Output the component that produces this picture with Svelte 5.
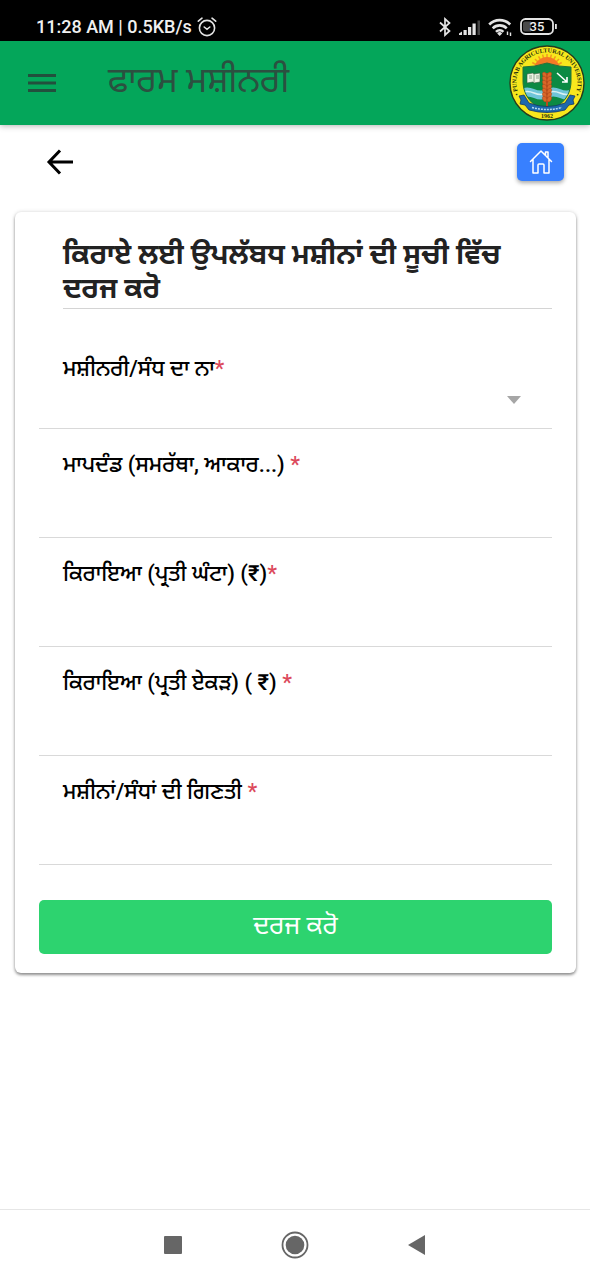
<script lang="ts">
  type Field = {
    id: string;
    label: string;
    star: string;
    kind: "select" | "text" | "number";
  };

  const fields: Field[] = [
    { id: "machine", label: "ਮਸ਼ੀਨਰੀ/ਸੰਧ ਦਾ ਨਾ", star: "*", kind: "select" },
    { id: "spec", label: "ਮਾਪਦੰਡ (ਸਮਰੱਥਾ, ਆਕਾਰ...)", star: " *", kind: "text" },
    { id: "rent-hour", label: "ਕਿਰਾਇਆ (ਪ੍ਰਤੀ ਘੰਟਾ) (₹)", star: "*", kind: "number" },
    { id: "rent-acre", label: "ਕਿਰਾਇਆ (ਪ੍ਰਤੀ ਏਕੜ) ( ₹)", star: " *", kind: "number" },
    { id: "count", label: "ਮਸ਼ੀਨਾਂ/ਸੰਧਾਂ ਦੀ ਗਿਣਤੀ", star: " *", kind: "number" },
  ];

  const rays = Array.from({ length: 13 }, (_, i) => i * 15 - 90);
  const grains = [27, 31, 35, 39, 43, 47, 51];
</script>

<div class="screen">
  <div class="status">
    <div class="status-side">
      <span>11:28 AM | 0.5KB/s</span>
      <svg width="20" height="22" viewBox="0 0 20 22" fill="none" stroke="#e4e4e4" stroke-width="1.6" stroke-linecap="round">
        <circle cx="10" cy="12" r="7.6" />
        <path d="M1.3 5.2 5 2.2M18.7 5.2 15 2.2M7.2 11l2.8 2.3 2.8-2.3" />
      </svg>
    </div>
    <div class="status-side">
      <svg width="12" height="20" viewBox="0 0 12 20" fill="none" stroke="#e4e4e4" stroke-width="1.7">
        <path d="M1 5.5 10.5 14 6 18V2l4.5 4L1 14.5" />
      </svg>
      <svg width="23" height="18" viewBox="0 0 23 18" fill="#e4e4e4">
        <path d="M1 15.5 4 13.5V17H1zM5.5 12h3.2v5H5.500zM10 9h3.200v8H10zM14.500 5.500h3.200V17h-3.200z" />
        <path d="M19.500 2.500h2.500V17h-2.500z" fill="#444" />
      </svg>
      <svg width="25" height="20" viewBox="0 0 25 20" fill="none" stroke="#e4e4e4" stroke-width="2.600">
        <path d="M1.200 7.500a14.700 14.700 0 0 1 21 0M4.700 11.300a9.800 9.800 0 0 1 14 0M8 14.800a5.200 5.200 0 0 1 7.400 0" />
        <path d="m11.700 19-2.500-2.600a3.500 3.500 0 0 1 5 0z" fill="#e4e4e4" stroke="none" />
        <path d="M19.500 14.500V18M22.500 15.500V19" stroke-width="1.400" />
      </svg>
      <svg width="38" height="18" viewBox="0 0 38 18">
        <rect x="1" y="1" width="32" height="15" rx="4.500" fill="none" stroke="#e4e4e4" stroke-width="1.800" />
        <path d="M5 3.500h6v10H5a2 2 0 0 1-2-2v-6a2 2 0 0 1 2-2z" fill="#4a4a4a" />
        <path d="M35 6h1.800v5H35z" fill="#e4e4e4" />
        <text x="17" y="13" class="battery-text">35</text>
      </svg>
    </div>
  </div>

  <header class="header">
    <button class="icon-button" type="button" aria-label="Menu">
      <svg width="28" height="22" viewBox="0 0 28 22" stroke="#22503d" stroke-width="2.800">
        <path d="M0 3.500h28M0 11h28M0 18.500h28" />
      </svg>
    </button>
    <h1 class="title">ਫਾਰਮ ਮਸ਼ੀਨਰੀ</h1>
    <svg width="76" height="76" viewBox="0 0 76 76">
      <defs>
        <path id="ring" d="M11.800 53.800A30.600 30.600 0 1 1 64.200 53.800" />
        <clipPath id="shield"><path d="M14 22q12 0 24-4 12 4 24 4v14c0 17-12 26-24 31-12-5-24-14-24-31z" /></clipPath>
      </defs>
      <circle cx="38" cy="38" r="37" fill="#f8e71d" stroke="#263b1c" stroke-width="1.400" />
      <g stroke="#f29a1e" stroke-width="1.500">
        {#each rays as angle}
          <path d="M38 9v12" transform="rotate({angle} 38 26)" />
        {/each}
      </g>
      <circle cx="38" cy="25" r="13" fill="#f47a26" />
      <g clip-path="url(#shield)">
        <path d="M12 14h52v54H12z" fill="#0b8a43" />
        <path d="M12 44q6-3 13 0t13 0 13 0 13 0v9q-6 3-13 0t-13 0-13 0-13 0z" fill="#6fc5d9" />
        <path d="M12 48q6-3 13 0t13 0 13 0 13 0" fill="none" stroke="#d8f1f3" stroke-width="1.500" />
      </g>
      <path d="M14 22q12 0 24-4 12 4 24 4v14c0 17-12 26-24 31-12-5-24-14-24-31z" fill="none" stroke="#24713b" />
      <path d="m18 29 6-1 1 1 6-1v9l-6 1-1-1-6 1z" fill="#eef4e4" stroke="#355d3c" stroke-width=".6" />
      <path d="M25 29v8M20 31h3M20 33h3M27 31h3M27 33h3" stroke="#65856b" stroke-width=".7" />
      <path d="m48 28 10 9m0-5v5h-5" fill="none" stroke="#fff" stroke-width="1.600" />
      <path d="M38 28v36" stroke="#b84b1d" stroke-width="2" />
      <g fill="#d96829" stroke="#9e3c16" stroke-width=".4">
        {#each grains as y}
          <ellipse cx="35.700" cy={y + 3} rx="2" ry="3" transform="rotate(-28 35.700 {y + 3})" />
          <ellipse cx="40.300" cy={y + 3} rx="2" ry="3" transform="rotate(28 40.300 {y + 3})" />
        {/each}
      </g>
      <path d="m10 51 5-1 5 8q18 7 36 0l5-8 5 1-2 4 1 4-5 1-4 5q-18 5-36 0l-4-5-5-1 1-4z" fill="#1c68ad" stroke="#173a63" stroke-width=".8" />
      <path d="M23 62.500q15 4 30 0" fill="none" stroke="#b6d9ee" stroke-width="1.500" stroke-dasharray="2 1" />
      <text class="logo-text"><textPath href="#ring" startOffset="50%">• PUNJAB AGRICULTURAL UNIVERSITY •</textPath></text>
      <text class="logo-text" x="38" y="73">1962</text>
    </svg>
  </header>

  <main class="content">
    <div class="actions">
      <button class="icon-button" type="button" aria-label="Back">
        <svg width="28" height="28" viewBox="0 0 28 28" fill="none" stroke="#000" stroke-width="3">
          <path d="M27 14H3M14 2.500 3 14l11 11.500" />
        </svg>
      </button>
      <button class="icon-button home" type="button" aria-label="Home">
        <svg width="24" height="26" viewBox="0 0 24 26" fill="none" stroke="#fff" stroke-width="1.500" stroke-linejoin="round" stroke-linecap="round">
          <path d="M1.500 12.500 12 2l10.500 10.500M4 10.500V24h5v-8q0-1 1-1h4q1 0 1 1v8h5V10.500M16.500 6.500V3H19v6" />
        </svg>
      </button>
    </div>

    <form class="card">
      <h2 class="heading">ਕਿਰਾਏ ਲਈ ਉਪਲੱਬਧ ਮਸ਼ੀਨਾਂ ਦੀ ਸੂਚੀ ਵਿੱਚ ਦਰਜ ਕਰੋ</h2>
      {#each fields as field}
        <div class="field">
          <label for={field.id}>{field.label}<span class="star">{field.star}</span></label>
          {#if field.kind === "select"}
            <div class="select-wrap">
              <select id={field.id} required>
                <option value=""></option>
              </select>
              <svg width="14" height="8" viewBox="0 0 14 8" fill="#a6a6a6"><path d="M0 0h14L7 8z" /></svg>
            </div>
          {:else}
            <input id={field.id} type={field.kind} required />
          {/if}
        </div>
      {/each}
      <button class="submit" type="submit">ਦਰਜ ਕਰੋ</button>
    </form>
  </main>

  <nav class="system-nav">
    <button class="icon-button" type="button" aria-label="Recent apps">
      <svg width="28" height="28" viewBox="0 0 28 28"><rect x="5" y="5" width="18" height="18" rx="1" fill="#666" /></svg>
    </button>
    <button class="icon-button" type="button" aria-label="Home screen">
      <svg width="28" height="28" viewBox="0 0 28 28">
        <circle cx="14" cy="14" r="12.500" fill="none" stroke="#666" stroke-width="1.800" />
        <circle cx="14" cy="14" r="9.300" fill="#666" />
      </svg>
    </button>
    <button class="icon-button" type="button" aria-label="Previous screen">
      <svg width="28" height="28" viewBox="0 0 28 28"><path d="M5 14 22 4v20z" fill="#666" /></svg>
    </button>
  </nav>
</div>

<style>
  :global(body) {
    margin: 0;
    background: #fff;
  }
  .screen {
    display: flex;
    flex-direction: column;
    min-height: 100vh;
    font-family: Roboto, "Noto Sans Gurmukhi", "Noto Sans", sans-serif;
    color: #000;
  }
  .screen :global(*) {
    box-sizing: border-box;
  }
  svg {
    display: block;
    flex: none;
  }
  .icon-button {
    display: flex;
    align-items: center;
    justify-content: center;
    padding: 0;
    border: 0;
    background: none;
    cursor: pointer;
  }
  .status {
    display: flex;
    justify-content: space-between;
    height: 41px;
    padding: 12px 32px 0 36px;
    background: #000;
    color: #f0f0f0;
    font-size: 18px;
    font-weight: 500;
  }
  .status-side {
    display: flex;
    align-items: center;
    gap: 7px;
  }
  .status-side:first-child {
    gap: 5px;
  }
  .battery-text {
    fill: #f0f0f0;
    font-size: 13px;
    font-weight: 500;
    text-anchor: middle;
  }
  .header {
    display: flex;
    align-items: center;
    height: 84px;
    padding: 0 5px 0 28px;
    background: #04a65a;
    box-shadow: 0 1px 6px rgba(0, 0, 0, 0.3);
  }
  .title {
    flex: 1;
    margin: 0 0 4px 52px;
    color: #2b5040;
    font-size: 35px;
    font-weight: 400;
    line-height: 40px;
  }
  .logo-text {
    fill: #26320d;
    font-family: "Liberation Serif", serif;
    font-size: 6px;
    font-weight: bold;
    text-anchor: middle;
  }
  .content {
    flex: 1;
    padding: 18px 14px 24px 15px;
  }
  .actions {
    display: flex;
    align-items: center;
    justify-content: space-between;
    padding: 0 12px 0 31px;
    margin-bottom: 31px;
  }
  .home {
    width: 47px;
    height: 38px;
    border-radius: 5px;
    background: #3880ff;
    box-shadow: 0 2px 4px rgba(0, 0, 0, 0.35);
  }
  .card {
    padding: 26px 24px 19px;
    border-radius: 6px;
    box-shadow: 0 2px 3px rgba(0, 0, 0, 0.4), 0 0 4px rgba(0, 0, 0, 0.15);
  }
  .heading {
    margin: 0 0 11px 24px;
    padding-bottom: 2px;
    border-bottom: 1px solid #d4d4d4;
    color: #222;
    font-size: 28px;
    font-weight: 700;
    line-height: 34px;
  }
  .field {
    padding-top: 21px;
    border-bottom: 1px solid #d9d9d9;
  }
  .field:nth-of-type(1) {
    padding-top: 34px;
  }
  label {
    display: block;
    padding-left: 24px;
    font-size: 22px;
    font-weight: 500;
    line-height: 30px;
  }
  .star {
    color: #dc4a5c;
    white-space: pre;
  }
  input,
  select {
    display: block;
    width: 100%;
    height: 57px;
    padding: 0 24px;
    border: 0;
    outline: 0;
    background: none;
    font: inherit;
    font-size: 22px;
    appearance: none;
  }
  .select-wrap {
    display: flex;
    align-items: center;
    height: 44px;
    padding: 0 31px 12px 0;
  }
  .select-wrap select {
    height: 32px;
  }
  .submit {
    display: block;
    width: 100%;
    height: 54px;
    margin-top: 35px;
    border: 0;
    border-radius: 5px;
    background: #2dd36f;
    color: #fff;
    font: inherit;
    font-size: 26px;
    cursor: pointer;
  }
  .system-nav {
    display: flex;
    align-items: center;
    justify-content: center;
    gap: 94px;
    height: 71px;
    border-top: 1px solid #e6e6e6;
  }
</style>
